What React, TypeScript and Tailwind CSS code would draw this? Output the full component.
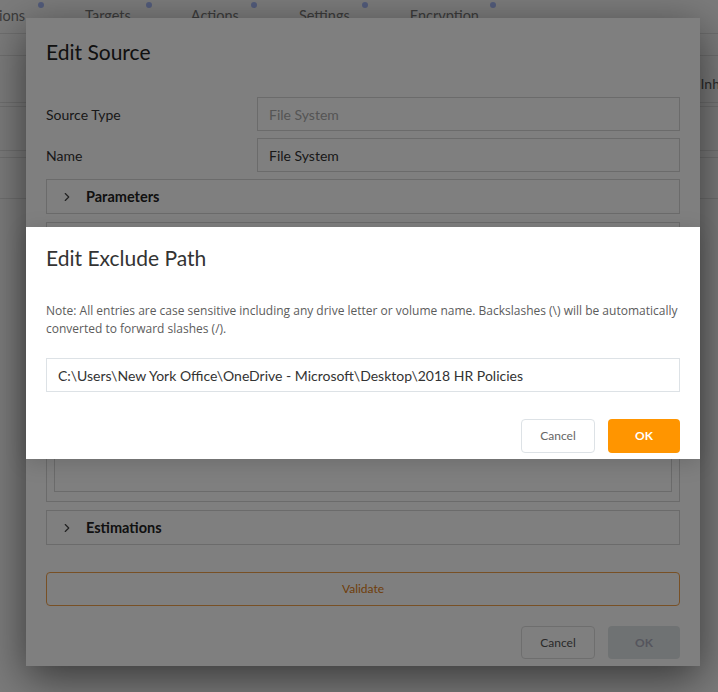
import { ChevronRight } from 'lucide-react';

const font = { fontFamily: 'Lato, "Open Sans", sans-serif' };

function Accordion({ title }: { title: string }) {
  return (
    <div className="flex h-[35px] items-center gap-[12px] border border-[#d6d6d6] px-[13px]">
      <ChevronRight className="h-[14px] w-[14px] text-[#444]" strokeWidth={2} />
      <span className="text-[14.5px] font-bold text-[#222]">{title}</span>
    </div>
  );
}

function BackgroundPage() {
  return (
    <div className="absolute inset-0 bg-[#f6f6f6]">
      <div className="relative flex h-[34px] items-start gap-[60px] border-b border-[#ddd] pt-[6px] text-[14.5px] leading-[20px] text-[#777]">
        <span className="-ml-[1px]">ions</span>
        <span>Targets</span>
        <span>Actions</span>
        <span>Settings</span>
        <span>Encryption</span>
        {[41, 149, 254, 365, 493].map((x) => (
          <span
            key={x}
            className="absolute top-[2px] h-[6px] w-[6px] rounded-full bg-[#a4b6f4]"
            style={{ left: x - 3 }}
          />
        ))}
      </div>
      <div className="h-[22px] border-b border-[#ddd]" />
      <div className="flex justify-end pt-[17px] text-[14px] text-[#555]">
        <span className="-mr-[2px]">Inh</span>
      </div>
      <div className="mt-[8px] h-[5px] border-y border-[#ddd]" />
      <div className="mt-[10px] h-[34px] border-b border-[#ddd]" />
      <div className="h-[7px] border-b border-[#ddd]" />
      <div className="mt-[40px] border-b border-[#ddd]" />
    </div>
  );
}

function EditSource() {
  return (
    <div className="absolute left-[26px] top-[18px] flex h-[648px] w-[674px] flex-col bg-white px-[20px] pt-[20px] shadow-[0_12px_40px_rgba(0,0,0,0.55)]">
      <h2 className="text-[21px] leading-[28px] text-[#222]">Edit Source</h2>
      <div className="mt-[31px] flex flex-col gap-[7px]">
        <div className="flex items-center">
          <span className="w-[211px] text-[14px] text-[#333]">Source Type</span>
          <div className="flex h-[34px] flex-1 items-center border border-[#d6d6d6] px-[11px] text-[14px] text-[#aaa]">
            File System
          </div>
        </div>
        <div className="flex items-center">
          <span className="w-[211px] text-[14px] text-[#333]">Name</span>
          <div className="flex h-[34px] flex-1 items-center border border-[#d6d6d6] px-[11px] text-[14px] text-[#333]">
            File System
          </div>
        </div>
      </div>
      <div className="mt-[7px] flex flex-col gap-[8px]">
        <Accordion title="Parameters" />
        <div className="flex h-[280px] flex-col justify-end border border-[#d6d6d6] px-[7px] pb-[9px]">
          <div className="h-[80px] border border-[#d6d6d6]" />
        </div>
        <Accordion title="Estimations" />
      </div>
      <button className="mt-[27px] h-[34px] w-full rounded-[4px] border border-[#f0a04b] text-[12px] text-[#e07c12]">
        Validate
      </button>
      <div className="mt-[20px] flex justify-end gap-[13px]">
        <button className="h-[33px] w-[74px] rounded-[4px] border border-[#ddd] text-[12px] text-[#555]">
          Cancel
        </button>
        <button className="h-[33px] w-[72px] rounded-[4px] bg-[#dfe5e6] text-[12px] font-bold text-[#aab]">
          OK
        </button>
      </div>
    </div>
  );
}

function EditExcludePath() {
  return (
    <div className="absolute left-[26px] top-[227px] flex h-[232px] w-[674px] flex-col bg-white px-[20px] pt-[17px] shadow-[0_4px_20px_rgba(0,0,0,0.15)]">
      <h2 className="text-[21px] leading-[28px] text-[#333]">Edit Exclude Path</h2>
      <p
        className="mt-[30px] text-[12px] leading-[18px] text-[#5c5c5c]"
        style={{ fontFamily: '"Open Sans", Lato, sans-serif' }}
      >
        Note: All entries are case sensitive including any drive letter or volume name. Backslashes (\) will be
        automatically converted to forward slashes (/).
      </p>
      <div className="mt-[20px] flex h-[34px] items-center border border-[#dde2e6] px-[11px] text-[14px] text-[#333]">
        C:\Users\New York Office\OneDrive - Microsoft\Desktop\2018 HR Policies
      </div>
      <div className="mt-[27px] flex justify-end gap-[13px]">
        <button className="h-[34px] w-[74px] rounded-[4px] border border-[#dde2e6] text-[12px] text-[#666]">
          Cancel
        </button>
        <button className="h-[34px] w-[72px] rounded-[4px] bg-[#ff9500] text-[12px] font-bold text-white">
          OK
        </button>
      </div>
    </div>
  );
}

export default function App() {
  return (
    <div className="relative h-[692px] w-[718px] overflow-hidden" style={font}>
      <BackgroundPage />
      <EditSource />
      <div className="absolute inset-0 bg-black/50" />
      <EditExcludePath />
    </div>
  );
}
